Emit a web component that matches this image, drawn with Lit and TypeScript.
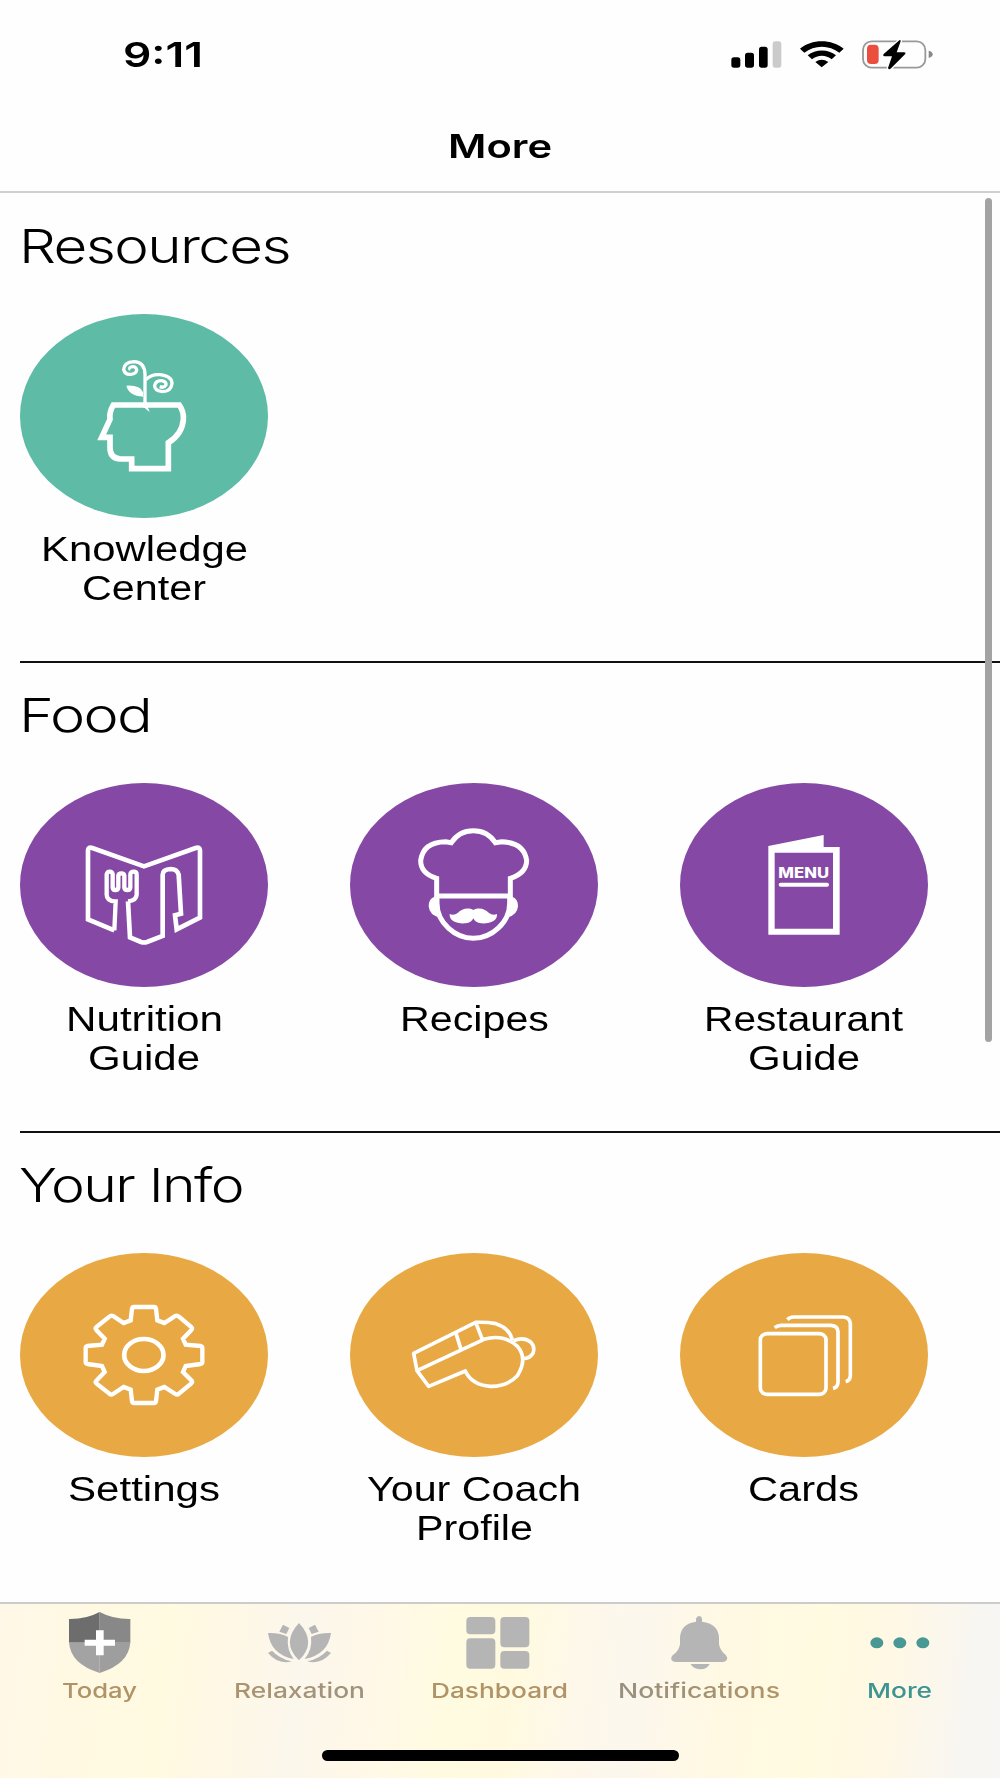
import { LitElement, html, svg, css } from "lit";
import { customElement, property, query } from "lit/decorators.js";
import { classMap } from "lit/directives/class-map.js";

/** One line of text, stretched horizontally until it fills the given width. */
@customElement("wide-text")
class WideText extends LitElement {
  static styles = css`
    :host { display: block; white-space: nowrap; }
    .line { display: inline-block; transform-origin: 0 50%; background: var(--text-fill, none); -webkit-background-clip: text; background-clip: text; }
  `;
  @property() text = "";
  @property({ type: Number }) width = 100;
  @query(".line") line!: HTMLElement;

  updated() {
    this.style.width = `${this.width}px`;
    this.line.style.transform = "none";
    const natural = this.line.getBoundingClientRect().width;
    this.line.style.transform = `scaleX(${this.width / natural})`;
  }
  render() {
    return html`<span class="line">${this.text}</span>`;
  }
}

type Line = [text: string, width: number];
interface Tile { icon: string; lines: Line[]; }
interface Section { title: Line; tone: string; tiles: Tile[]; }

const gear = svg`
  <path d="M404 471H464Q469 471 470 476L474 511L495 519L528 498Q534 495 539 500L576 531Q580 535 576 540L551 566L559 584L604 588Q609 589 609 594V636Q609 641 604 642L559 648L551 666L577 692Q580 696 576 700L539 731Q534 736 528 732L495 711L474 719L470 754Q469 759 464 759H404Q399 759 398 754L394 719L373 711L341 732Q335 736 330 731L291 700Q287 696 291 692L316 666L308 648L264 642Q259 641 259 636V594Q259 589 264 588L308 584L316 566L291 540Q287 535 291 531L330 500Q335 495 341 498L373 519L394 511L398 476Q399 471 404 471Z" stroke-width="13"/>
  <ellipse cx="433.500" cy="615" rx="59" ry="48" stroke-width="14"/>`;

const ICONS: Record<string, { box: string; art: unknown }> = {
  knowledge: {
    box: "62 41 744 612",
    art: svg`
      <path d="M342 314H540Q554 334 552 358Q548 402 507 427V505H397V476H364Q331 474 332 440V411H307L332 357Q329 336 342 314Z" stroke-width="17"/>
      <path d="M437 322V222Q436 185 404 184Q374 186 373 207Q376 223 394 222Q412 220 412 208Q409 196 395 200Q388 204 393 208" stroke-width="10"/>
      <path d="M440 238Q455 221 482 223Q518 227 518 250Q515 274 489 274Q465 271 466 256Q469 240 487 241Q502 244 500 254Q494 264 481 259" stroke-width="10"/>
      <path class="solid" d="M381 256Q424 254 431 276V289Q388 286 381 256ZM432 316H444L451 335Q438 327 432 316Z"/>`,
  },
  nutrition: {
    box: "62 310 744 612",
    art: svg`
      <path d="M345 752L266 719V512Q267 501 279 505L434 560L589 505Q601 501 602 512V714L532 749L527 707L545 702L538 585Q533 568 514 568Q490 569 490 585V769L443 787Q434 790 425 787L392 773L386 665" stroke-width="14"/>
      <path d="M345 752L349 665Q322 664 322 645V584Q324 576 331 576Q339 576 340 584V624Q341 631 348 631Q356 631 357 624V588Q358 581 366 581Q374 581 375 588V624Q376 631 384 631Q392 631 393 624V584Q394 576 403 576Q412 576 412 584V645Q411 663 386 665" stroke-width="13"/>`,
  },
  recipes: {
    box: "32 40 744 612",
    art: svg`
      <path d="M292 379V326Q244 311 244 273Q251 217 319 216L336 219Q359 183 402 183Q445 183 468 219L487 216Q555 219 562 273Q561 311 513 326V379Z" stroke-width="15"/>
      <path d="M293 379V400C293 460 348 506 402 506C456 506 511 460 511 400V379" stroke-width="15"/>
      <path class="solid" d="M286 381Q268 386 268 410Q270 437 302 444L291 400ZM518 381Q536 386 536 410Q534 437 502 444L513 400Z"/>
      <path class="solid" d="M402 421C386 412 367 417 356 429Q344 439 331 433C329 453 351 463 379 461Q396 459 402 446Q408 459 425 461C453 463 475 453 473 433Q460 439 448 429C437 417 418 412 402 421Z"/>`,
  },
  menu: {
    box: "61 40 744 612",
    art: svg`
      <path class="solid" fill-rule="evenodd" d="M326 229L492 196V232H540V495H326ZM345 249V477H520V249Z"/>
      <path d="M363 345H502" stroke-width="12" stroke-linecap="round"/>
      <text class="menu" x="356" y="325" textLength="152" lengthAdjust="spacingAndGlyphs">MENU</text>`,
  },
  settings: { box: "62 309 744 612", art: gear },
  whistle: {
    box: "32 40 744 612",
    art: svg`
      <path d="M233 393L434 299Q493 281 535 321Q566 357 534 408Q503 441 453 440Q397 436 378 394L268 440L233 393L223 341L409 248Q445 247 470 252Q512 266 519 303M350 281L364 326M409 248L429 299M523 303Q552 291 574 307Q588 321 581 341Q571 357 552 357" stroke-width="11" stroke-linejoin="round"/>`,
  },
  cards: {
    box: "61 40 744 612",
    art: svg`
      <rect x="302" y="282" width="197" height="182" rx="21" ry="18" stroke-width="11"/>
      <path d="M345 264Q354 257 364 257H514Q534 258 535 276V428Q534 443 520 446M383 240Q391 232 402 232H551Q571 234 572 252V408Q571 423 558 426" stroke-width="11"/>`,
  },
};

const SECTIONS: Section[] = [
  { title: ["Resources", 271], tone: "green", tiles: [
    { icon: "knowledge", lines: [["Knowledge", 207], ["Center", 124]] },
  ] },
  { title: ["Food", 132], tone: "purple", tiles: [
    { icon: "nutrition", lines: [["Nutrition", 157], ["Guide", 112]] },
    { icon: "recipes", lines: [["Recipes", 149]] },
    { icon: "menu", lines: [["Restaurant", 199], ["Guide", 112]] },
  ] },
  { title: ["Your Info", 224], tone: "orange", tiles: [
    { icon: "settings", lines: [["Settings", 152]] },
    { icon: "whistle", lines: [["Your Coach", 214], ["Profile", 117]] },
    { icon: "cards", lines: [["Cards", 111]] },
  ] },
];

@customElement("icon-tile")
class IconTile extends LitElement {
  static styles = css`
    :host { display: flex; flex-direction: column; align-items: center; width: 248px; }
    .disc { display: block; width: 248px; height: 204px; border-radius: 50%; margin-bottom: 12.800px; }
    .disc.green { background: #5dbba6; }
    .disc.purple { background: #8548a5; }
    .disc.orange { background: #e8a944; }
    .disc path, .disc rect, .disc ellipse { fill: none; stroke: #fff; }
    .disc .solid { fill: #fff; stroke: none; }
    .menu { font: 800 42px Inter, sans-serif; fill: #fff; }
    wide-text { font: 34.4px/38.7px "Liberation Sans", sans-serif; color: #000; }
  `;
  @property({ attribute: false }) tile!: Tile;
  @property() tone = "green";

  render() {
    const { box, art } = ICONS[this.tile.icon];
    return html`
      <svg class=${classMap({ disc: true, [this.tone]: true })} viewBox=${box} preserveAspectRatio="none">${art}</svg>
      ${this.tile.lines.map(([t, w]) => html`<wide-text .text=${t} .width=${w}></wide-text>`)}
    `;
  }
}

const TABS: { label: Line; tint: string; box: string; art: unknown }[] = [
  { label: ["Today", 75], tint: "sand", box: "0 42 600 216", art: svg`
      <path fill="#6d6d6d" d="M299 66V158H207V87Q258 88 299 66Z"/>
      <path fill="#888" d="M299 66V158H391V87Q340 88 299 66Z"/>
      <path fill="#a3a3a3" d="M207 157H299V249Q211 222 207 157Z"/>
      <path fill="#9e9e9e" d="M391 157H299V249Q387 222 391 157Z"/>
      <path fill="#fff" d="M288 121H311V149H345V167H311V196H288V167H254V149H288Z"/>` },
  { label: ["Relaxation", 131], tint: "fade-out", box: "600 42 600 216", art: svg`
      <path d="M897 99Q952 158 897 211Q842 158 897 99Z"/>
      <path d="M804 129Q842 128 864 141Q859 178 881 207Q813 194 804 129ZM993 129Q955 128 933 141Q938 178 914 207Q984 194 993 129Z"/>
      <path d="M849 104L868 114L859 132L838 125ZM945 104L926 114L935 132L956 125Z"/>
      <path d="M816 182Q838 206 875 214Q835 225 804 189ZM981 182Q959 206 922 214Q962 225 993 189Z"/>` },
  { label: ["Dashboard", 137], tint: "sand", box: "1200 42 600 216", art: svg`
      <rect x="1399" y="81" width="87" height="52" rx="12"/>
      <rect x="1399" y="145" width="87" height="91" rx="12"/>
      <rect x="1501" y="81" width="87" height="91" rx="12"/>
      <rect x="1501" y="183" width="87" height="53" rx="12"/>` },
  { label: ["Notifications", 162], tint: "fade-in", box: "1800 42 600 216", art: svg`
      <path d="M2088 95V86Q2090 78 2098 78Q2105 79 2106 86V95Q2155 102 2157 142V162Q2159 180 2178 196Q2184 203 2180 210Q2176 216 2168 216H2028Q2018 216 2014 209Q2012 201 2018 196Q2038 182 2040 162V142Q2042 102 2088 95Z"/>
      <path d="M2072 222H2129Q2122 238 2100 238Q2079 237 2072 222Z"/>` },
  { label: ["More", 65], tint: "active", box: "2400 42 600 216", art: svg`
      <ellipse cx="2630.500" cy="158.500" rx="19.500" ry="16.500"/>
      <ellipse cx="2699.500" cy="158.500" rx="19.500" ry="16.500"/>
      <ellipse cx="2768.500" cy="158.500" rx="19.500" ry="16.500"/>` },
];

@customElement("app-root")
class AppRoot extends LitElement {
  static styles = css`
    :host { display: flex; flex-direction: column; width: 1000px; height: 1778px; background: #fefefe; overflow: hidden; color: #000; }
    .status { display: flex; justify-content: space-between; align-items: center; box-sizing: border-box; height: 110px; padding: 0 60px 0 122.500px; }
    .clock { font: 600 34.5px/42px Inter, sans-serif; }
    .signals { display: block; width: 220px; height: 50px; }
    .title { display: flex; justify-content: center; box-sizing: border-box; height: 83px; padding-top: 14.500px; border-bottom: 2px solid #cfcfcf; font: 600 33px/42px Inter, sans-serif; }
    .body { position: relative; flex: 1; min-height: 0; }
    .section { display: flex; flex-direction: column; box-sizing: border-box; height: 469.8px; margin-left: 20.300px; padding-top: 24.700px; border-bottom: 2px solid #111; }
    .section:last-of-type { border-bottom: 0; height: 409px; }
    .heading { font: 300 46.800px/56px Inter, sans-serif; letter-spacing: -1.3px; margin: 0 0 40px -1.500px; }
    .tiles { display: flex; align-items: flex-start; gap: 81.800px; }
    .thumb { position: absolute; top: 5px; right: 8px; width: 7.500px; height: 844px; border-radius: 4px; background: #a3a3a3; }
    .tabbar { display: flex; flex-direction: column; align-items: center; box-sizing: border-box; height: 176px; border-top: 2px solid #cccccb;
      background: linear-gradient(97deg, #fff8e8 0%, #fff9e3 8%, #fffae0 17%, #fff8e5 22%, #fcf7ec 30%, #fff8e8 37%, #fffbe0 45%, #fffadf 51%, #fef8ea 57%, #fcf7ed 63%, #fff9e3 72%, #fffae0 81%, #fff8e5 88%, #f8f6f2 96%, #f7f6f4 100%); }
    .tabs { display: flex; width: 100%; height: 146px; }
    .tab { display: flex; flex-direction: column; align-items: center; width: 200px; }
    .glyph { display: block; width: 200px; height: 72px; margin-bottom: 1.500px; fill: #b5b5b5; }
    .tab wide-text { font: 500 20.500px/26px Inter, sans-serif; margin-right: 1.500px; }
    .sand { color: #b09468; }
    .fade-out, .fade-in { color: transparent; }
    .fade-out { --text-fill: linear-gradient(90deg, #ab946f, #9d937f); }
    .fade-in { --text-fill: linear-gradient(90deg, #979080, #b09468); }
    .active { color: #3e9490; }
    .active .glyph { fill: #4a9893; }
    .home { width: 357px; height: 11px; border-radius: 6px; background: #000; }
  `;

  render() {
    return html`
      <div class="status">
        <wide-text class="clock" .text=${"9:11"} .width=${80}></wide-text>
        <svg class="signals" viewBox="0 0 660 150">
          <rect x="34" y="82" width="27" height="31" rx="8"/>
          <rect x="75" y="68" width="27" height="45" rx="8"/>
          <rect x="117" y="50" width="26" height="63" rx="8"/>
          <rect x="158" y="34" width="26" height="79" rx="8" fill="#cbcbcb"/>
          <path d="M240 56C274 26 336 26 371 56L358 68C328 44 283 44 253 68ZM263 76C286 57 325 57 348 76L335 88C318 74 293 74 276 88ZM286 96Q305 82 325 96L305 112Z"/>
          <rect x="429" y="34" width="187" height="79" rx="26" fill="none" stroke="#999" stroke-width="5.500"/>
          <path d="M626 62Q638 65 638 73Q638 81 626 84Z" fill="#888"/>
          <rect x="441" y="44" width="35" height="58" rx="12" fill="#ec4e3d"/>
          <path d="M539 30L491 72Q487 78 494 79H516L504 114Q507 121 513 115L555 73Q559 67 552 67H530L542 34Q542 29 539 30Z" stroke="#fefefe" stroke-width="8" paint-order="stroke"/>
        </svg>
      </div>
      <div class="title"><wide-text .text=${"More"} .width=${104}></wide-text></div>
      <div class="body">
        ${SECTIONS.map((s) => html`
          <section class="section">
            <wide-text class="heading" .text=${s.title[0]} .width=${s.title[1]}></wide-text>
            <div class="tiles">
              ${s.tiles.map((t) => html`<icon-tile .tile=${t} .tone=${s.tone}></icon-tile>`)}
            </div>
          </section>`)}
        <div class="thumb"></div>
      </div>
      <nav class="tabbar">
        <div class="tabs">
          ${TABS.map((t) => html`
            <div class=${classMap({ tab: true, active: t.tint === "active" })}>
              <svg class="glyph" viewBox=${t.box}>${t.art}</svg>
              <wide-text class=${t.tint} .text=${t.label[0]} .width=${t.label[1]}></wide-text>
            </div>`)}
        </div>
        <div class="home"></div>
      </nav>
    `;
  }
}
